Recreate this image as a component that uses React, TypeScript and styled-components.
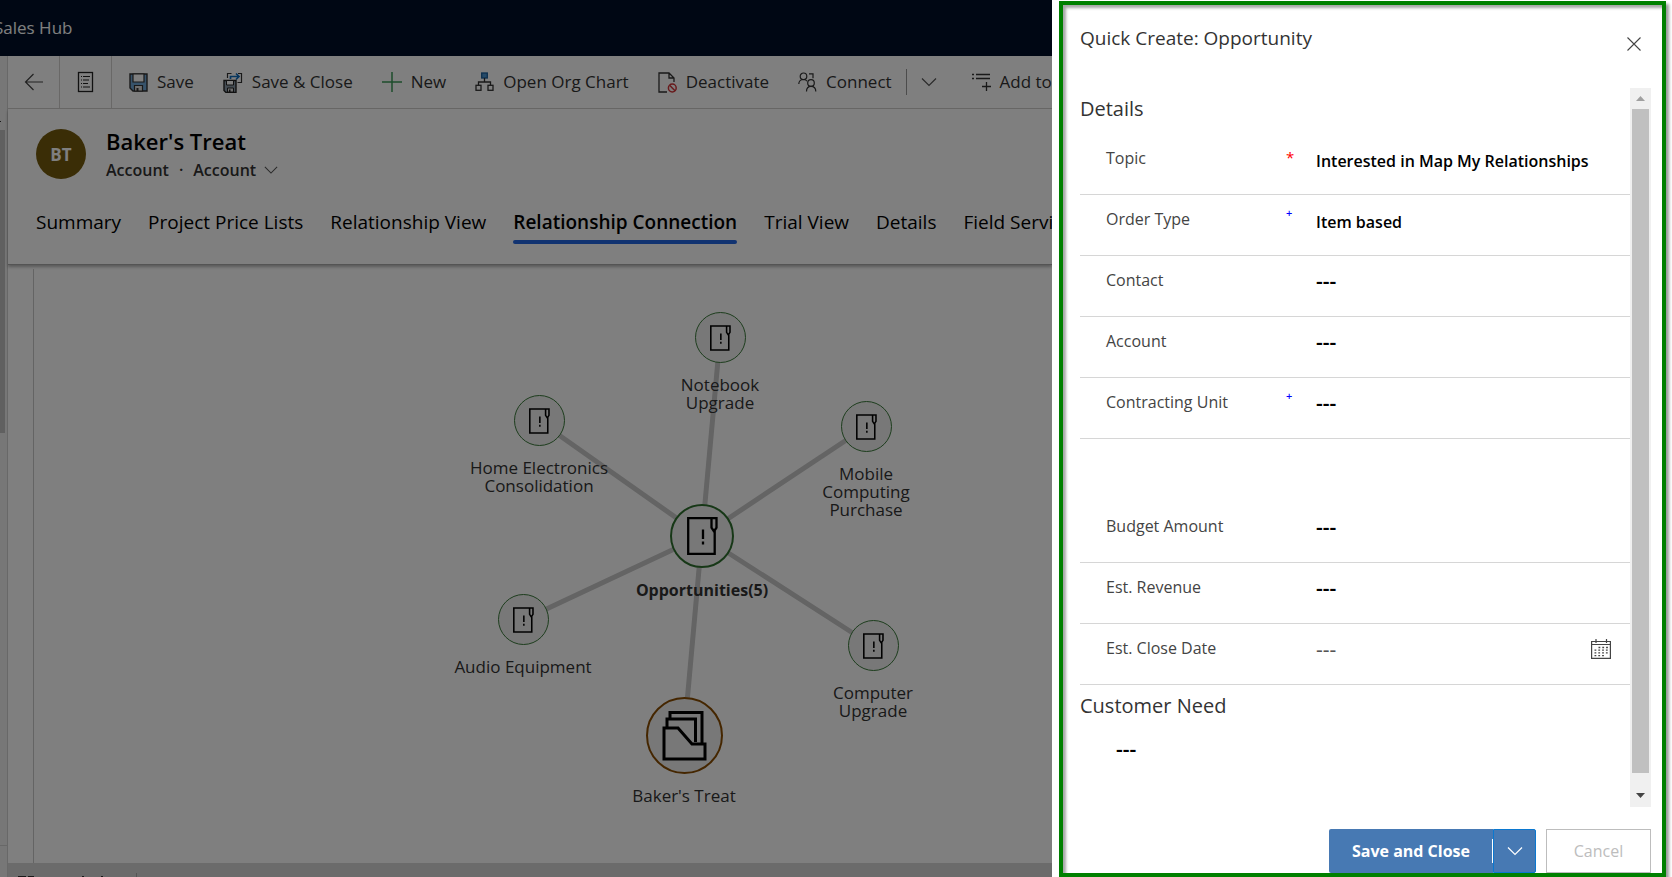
import React from 'react';
import styled, { createGlobalStyle } from 'styled-components';

const GlobalStyle = createGlobalStyle`
  *, *::before, *::after { box-sizing: border-box; }
  body { margin: 0; background: #fff; }
  body, button, input, select, textarea {
    font-family: 'Open Sans', 'Noto Sans', sans-serif;
  }
  button, input, select, textarea { margin: 0; border: 0; padding: 0; background: none; }
  h1, h2 { margin: 0; font-weight: 400; }
`;

/* ---------- page frame ---------- */

const Page = styled.div`
  display: grid;
  grid-template-columns: minmax(0, 1fr) 620px;
  min-height: 100vh;
`;

const AppPane = styled.div`
  position: relative;
  display: flex;
  flex-direction: column;
  overflow: hidden;
  background: #fff;
`;

const Backdrop = styled.div`
  position: absolute;
  inset: 0;
  background: rgba(0, 0, 0, 0.5);
`;

const NavBar = styled.header`
  display: flex;
  align-items: center;
  height: 56px;
  margin-left: -6px;
  padding-bottom: 2px;
  background: #000f28;
  color: #fff;
  font-size: 17px;
  white-space: nowrap;
`;

const Workspace = styled.div`
  flex: 1;
  display: flex;
`;

const Rail = styled.div`
  display: flex;
  flex-direction: column;
  width: 8px;
  padding-top: 65px;
  border-right: 1px solid #d0d0d0;
  background: #efefef;
`;

const RailTick = styled.div`
  width: 1px;
  height: 1px;
  background: #333;
`;

const RailThumb = styled.div`
  width: 5px;
  height: 303px;
  margin-top: 8px;
  background: #c0c0c0;
`;

const RailFoot = styled.div`
  height: 32px;
  margin-top: auto;
  border-top: 1px solid #d0d0d0;
`;

const Main = styled.main`
  flex: 1;
  min-width: 0;
  display: flex;
  flex-direction: column;
`;

/* ---------- command bar ---------- */

const CommandBar = styled.div`
  display: flex;
  height: 53px;
  border-bottom: 1px solid #d2d0ce;
  overflow: hidden;
`;

const SquareButton = styled.button`
  display: flex;
  flex: none;
  align-items: center;
  justify-content: center;
  width: 52px;
  border-right: 1px solid #d2d0ce;
`;

const Commands = styled.div`
  display: flex;
  align-items: center;
  gap: 29px;
  padding-left: 17px;
`;

const Command = styled.button`
  display: flex;
  flex: none;
  align-items: center;
  gap: 9px;
  color: #333;
  font-size: 17px;
  line-height: 24px;
  white-space: nowrap;
`;

const SplitCommand = styled.div`
  display: flex;
  flex: none;
  align-items: center;
  gap: 14px;
  padding-right: 6px;
`;

const SplitLine = styled.span`
  width: 1px;
  height: 26px;
  background: #999;
`;

const IconButton = styled.button`
  display: flex;
  align-items: center;
  justify-content: center;
  padding: 0;
`;

/* ---------- record header ---------- */

const RecordHeader = styled.section`
  position: relative;
  padding: 20px 0 20px 28px;
  border-bottom: 1px solid #a8a8a8;
  box-shadow: 0 2px 3px rgba(0, 0, 0, 0.3);
`;

const Identity = styled.div`
  display: flex;
  gap: 20px;
  height: 52px;
`;

const Avatar = styled.div`
  display: flex;
  align-items: center;
  justify-content: center;
  width: 50px;
  height: 50px;
  border-radius: 50%;
  background: #745a0c;
  color: #fff;
  font-size: 17px;
  font-weight: 700;
`;

const RecordName = styled.h1`
  margin-top: -3px;
  color: #000;
  font-size: 22px;
  font-weight: 600;
  line-height: 30px;
`;

const RecordMeta = styled.div`
  display: flex;
  align-items: center;
  gap: 10px;
  color: #333;
  font-size: 16px;
  font-weight: 600;
  line-height: 28px;
`;

const FormPicker = styled.button`
  display: flex;
  align-items: center;
  gap: 8px;
  color: inherit;
  font-size: 16px;
  font-weight: 600;
  line-height: 28px;
`;

const Tabs = styled.nav`
  display: flex;
  gap: 27px;
  margin-top: 27px;
`;

const Tab = styled.a<{ $active?: boolean }>`
  flex: none;
  color: #000;
  font-size: 19px;
  font-weight: ${(p) => (p.$active ? 600 : 400)};
  line-height: 28px;
  white-space: nowrap;
  text-decoration: none;

  &::after {
    content: '';
    display: block;
    height: 4px;
    margin-top: 4px;
    border-radius: 2px;
    background: ${(p) => (p.$active ? '#2266e3' : 'transparent')};
  }
`;

/* ---------- relationship graph ---------- */

const Canvas = styled.section`
  position: relative;
  flex: 1;
  min-height: 560px;
  margin: 4px 0 0 25px;
  border-left: 1px solid #c8c8c8;
`;

const Edges = styled.svg`
  position: absolute;
  inset: 0;
  width: 100%;
  height: 100%;
`;

const NodeSpot = styled.div`
  position: absolute;
  width: 0;
  display: flex;
  flex-direction: column;
  align-items: center;
  gap: 13px;
`;

const kinds = {
  leaf: { size: 51, border: 1, color: '#3a7a3a', weight: 500, font: 17 },
  hub: { size: 64, border: 2, color: '#2f702f', weight: 700, font: 16 },
  root: { size: 77, border: 2, color: '#8a4d00', weight: 500, font: 17 },
};
type Kind = keyof typeof kinds;

const Bubble = styled.div<{ $kind: Kind }>`
  display: flex;
  flex: none;
  align-items: center;
  justify-content: center;
  width: ${(p) => kinds[p.$kind].size}px;
  height: ${(p) => kinds[p.$kind].size}px;
  border: ${(p) => kinds[p.$kind].border}px solid ${(p) => kinds[p.$kind].color};
  border-radius: 50%;
  background: #f0f0f0;
`;

const NodeLabel = styled.div<{ $kind: Kind }>`
  color: #333;
  font-size: ${(p) => kinds[p.$kind].font}px;
  font-weight: ${(p) => kinds[p.$kind].weight};
  line-height: 18px;
  text-align: center;
  white-space: pre;
`;

const StatusBar = styled.footer`
  display: flex;
  align-items: flex-end;
  height: 14px;
  padding-left: 10px;
  background: #d6d6d6;
`;

interface GraphNode {
  label: string;
  x: number;
  y: number;
  kind: Kind;
}

const hub: GraphNode = { label: 'Opportunities(5)', x: 668, y: 267, kind: 'hub' };
const spokes: GraphNode[] = [
  { label: 'Notebook\nUpgrade', x: 686, y: 69, kind: 'leaf' },
  { label: 'Home Electronics\nConsolidation', x: 505, y: 152, kind: 'leaf' },
  { label: 'Mobile\nComputing\nPurchase', x: 832, y: 158, kind: 'leaf' },
  { label: 'Audio Equipment', x: 489, y: 351, kind: 'leaf' },
  { label: 'Computer\nUpgrade', x: 839, y: 377, kind: 'leaf' },
  { label: "Baker's Treat", x: 650, y: 467, kind: 'root' },
];

/* ---------- quick create panel ---------- */

const PanelArea = styled.aside`
  display: flex;
  padding: 1px 6px 0 7px;
  background: #fff;
`;

const Panel = styled.form`
  flex: 1;
  min-width: 0;
  display: flex;
  flex-direction: column;
  padding-left: 17px;
  border: 4px solid #008000;
  box-shadow: 3px 3px 3px rgba(0, 0, 0, 0.4), inset 3px 3px 3px rgba(0, 0, 0, 0.35);
`;

const PanelHeader = styled.div`
  display: flex;
  justify-content: space-between;
  align-items: flex-start;
  height: 83px;
  padding: 19px 20px 0 0;
`;

const PanelTitle = styled.h1`
  color: #333;
  font-size: 19px;
  line-height: 28px;
`;

const CloseButton = styled(IconButton)`
  width: 16px;
  height: 16px;
  margin-top: 12px;
`;

const PanelBody = styled.div`
  flex: 1;
  display: flex;
  margin-right: 11px;
`;

const Fields = styled.div`
  flex: 1;
  min-width: 0;
`;

const SectionTitle = styled.h2`
  display: block;
  height: 46px;
  padding-top: 7px;
  color: #333;
  font-size: 20px;
  line-height: 28px;
`;

const Row = styled.div`
  display: flex;
  align-items: flex-start;
  height: 61px;
  padding-left: 26px;
  border-bottom: 1px solid #d6d6d6;
`;

const BlankRow = styled.div`
  height: 63px;
`;

const Label = styled.label`
  width: 180px;
  padding-top: 12px;
  color: #444;
  font-size: 16px;
  line-height: 24px;
`;

const Marker = styled.span<{ $required?: boolean }>`
  width: 30px;
  padding-top: ${(p) => (p.$required ? 11 : 10)}px;
  color: ${(p) => (p.$required ? '#f00' : '#00f')};
  font-size: ${(p) => (p.$required ? 15 : 11)}px;
  font-weight: ${(p) => (p.$required ? 400 : 600)};
  line-height: ${(p) => (p.$required ? 24 : 16)}px;
`;

const TextField = styled.input<{ $light?: boolean }>`
  flex: 1;
  min-width: 0;
  height: 24px;
  margin-top: 15px;
  color: ${(p) => (p.$light ? '#555' : '#000')};
  font-size: 16px;
  font-weight: ${(p) => (p.$light ? 400 : 600)};
  outline: none;

  &::placeholder {
    color: inherit;
    font-size: 21px;
    opacity: 1;
  }
`;

const Choice = styled.select`
  flex: 1;
  height: 24px;
  margin-top: 15px;
  appearance: none;
  color: #000;
  font-size: 16px;
  font-weight: 600;
  outline: none;
`;

const CalendarButton = styled(IconButton)`
  margin: 15px 19px 0 0;
`;

const Notes = styled.textarea`
  display: block;
  width: calc(100% - 36px);
  height: 60px;
  margin-left: 36px;
  padding-top: 6px;
  color: #000;
  font-size: 16px;
  font-weight: 600;
  line-height: 24px;
  resize: none;
  outline: none;

  &::placeholder {
    color: inherit;
    font-size: 21px;
    opacity: 1;
  }
`;

const ScrollTrack = styled.div`
  display: flex;
  flex-direction: column;
  align-items: center;
  width: 21px;
  background: #f0f0f0;
`;

const ScrollArrow = styled.div<{ $down?: boolean }>`
  display: flex;
  align-items: center;
  justify-content: center;
  height: ${(p) => (p.$down ? 24 : 21)}px;
`;

const ScrollThumb = styled.div`
  flex: 1;
  width: 17px;
  margin-bottom: 10px;
  background: #c0c0c0;
`;

const PanelFooter = styled.div`
  display: flex;
  justify-content: flex-end;
  height: 66px;
  padding: 22px 11px 0 0;
`;

const PrimaryButton = styled.button`
  width: 164px;
  padding: 0;
  border-radius: 2px 0 0 2px;
  background: #4779b3;
  color: #fff;
  font-size: 16px;
  font-weight: 700;
`;

const MoreButton = styled(IconButton)`
  position: relative;
  width: 43px;
  border: 1px solid #0b78d0;
  border-radius: 0 2px 2px 0;
  background: #4779b3;

  &::before {
    content: '';
    position: absolute;
    left: -2px;
    top: 9px;
    width: 1px;
    height: 24px;
    background: #fff;
  }
`;

const CancelButton = styled.button`
  width: 105px;
  margin-left: 10px;
  border: 1px solid #bdbdbd;
  color: #bdbdbd;
  font-size: 16px;
`;

/* ---------- icons ---------- */

const Chevron = ({ color = '#555', size = 16 }: { color?: string; size?: number }) => (
  <svg width={size} height={size} viewBox="0 0 16 16" fill="none" stroke={color} strokeWidth="1.2">
    <path d="M1 4.5l7 7 7-7" />
  </svg>
);

const BackIcon = () => (
  <svg width="20" height="20" viewBox="0 0 20 20" fill="none" stroke="#444" strokeWidth="1.2">
    <path d="M19 10H1.500M9.500 2L1.500 10l8 8" />
  </svg>
);

const FormIcon = () => (
  <svg width="18" height="22" viewBox="0 0 18 22" fill="none" stroke="#222">
    <rect x="1.500" y="1.500" width="14" height="19" strokeWidth="1.300" />
    <path d="M4 5.500h1M6 5.500h7M4 9h1M6 9h6M4 12.500h1M6 12.500h5M4 16h1M6 16h7" />
  </svg>
);

const SaveIcon = () => (
  <svg width="19" height="19" viewBox="0 0 19 19">
    <path d="M1 1h17v17H4l-3-3z" fill="#6fa6d6" stroke="#333" strokeWidth="1.400" />
    <path d="M4 1h11v8H4z" fill="#fff" stroke="#333" strokeWidth="1.200" />
    <path d="M5.500 18v-5.500h8V18z" fill="#ddd" stroke="#333" strokeWidth="1.200" />
    <path d="M7.500 15h2v3h-2z" fill="#333" />
  </svg>
);

const SaveCloseIcon = () => (
  <svg width="20" height="21" viewBox="0 0 20 21" fill="none">
    <path d="M4.500 6V1.500h4M15 1.500h3.500v9h-4" stroke="#333" strokeWidth="1.200" />
    <path d="M7.500 7V4.500h8M13 1.500l3 3-3 3" stroke="#0f6cbd" strokeWidth="1.700" />
    <path d="M1 8.500h12v12H3l-2-2z" fill="#8a9aa8" stroke="#222" strokeWidth="1.400" />
    <path d="M3.500 8.500h7V13h-7z" fill="#fff" stroke="#222" />
    <path d="M4.500 20v-4h6v4z" fill="#ddd" stroke="#222" />
    <path d="M6 17.500h1.500V20H6z" fill="#222" />
  </svg>
);

const PlusIcon = () => (
  <svg width="20" height="20" viewBox="0 0 20 20" stroke="#3a9a58" strokeWidth="1.500">
    <path d="M10 0v20M0 10h20" />
  </svg>
);

const OrgIcon = () => (
  <svg width="19" height="20" viewBox="0 0 19 20" fill="none" stroke="#333" strokeWidth="1.300">
    <rect x="6.700" y="1" width="5.600" height="5" fill="#4a94d0" stroke="#1a5f9c" />
    <path d="M9.500 6v4M3.500 13v-3h12v3" />
    <rect x="1" y="13.300" width="5" height="5" />
    <rect x="13" y="13.300" width="5" height="5" />
  </svg>
);

const DeactivateIcon = () => (
  <svg width="19" height="21" viewBox="0 0 19 21" fill="none" stroke="#333" strokeWidth="1.300">
    <path d="M9 20H1V1h10l5 5v4M11 1v5h5" />
    <circle cx="14.300" cy="16" r="3.900" stroke="#d13438" strokeWidth="1.500" />
    <path d="M11.600 13.300l5.400 5.400" stroke="#d13438" strokeWidth="1.500" />
  </svg>
);

const ConnectIcon = () => (
  <svg width="19" height="20" viewBox="0 0 19 20" fill="none" stroke="#333" strokeWidth="1.200">
    <circle cx="5.500" cy="4.300" r="3.300" />
    <path d="M.800 12c0-3 2-4.500 4.700-4.500 1.500 0 2.700.6 3.500 1.600" />
    <circle cx="13" cy="11" r="3.300" />
    <path d="M8.500 19.500c0-3.300 1.800-5.200 4.500-5.200s4.800 1.900 4.800 5.200M11 1.800h4v4.500" />
  </svg>
);

const AddToIcon = () => (
  <svg width="19" height="20" viewBox="0 0 19 20" fill="none" stroke="#333" strokeWidth="1.300">
    <path d="M0 2.500h2M4 2.500h14M0 6.500h2M4 6.500h14M14.500 10v9M10 14.500h9" />
  </svg>
);

const OpportunityIcon = ({ width }: { width: number }) => (
  <svg
    width={width}
    height={Math.round((width * 38) / 31)}
    viewBox="0 0 31 38"
    fill="none"
    stroke="#000"
    strokeWidth="2.300"
  >
    <path d="M24.500 1.200H1.200v35.600h26.500V14M24.500 1.200h5v9.500L27 14.500l-2.500-3.800z" />
    <path d="M16 12.500v9.500M16 24.500v3" />
  </svg>
);

const FolderIcon = () => (
  <svg width="45" height="51" viewBox="0 0 45 51" fill="none" stroke="#000" strokeWidth="3">
    <path d="M8 9V2.500h32V33M5 17V9h28.500v23M2 18v31h41V34H30L16 18z" />
  </svg>
);

const CalendarIcon = () => (
  <svg width="20" height="20" viewBox="0 0 20 20" fill="none" stroke="#444">
    <path d="M.600 2.500h18.800v16.800H.600zM.600 5.500h18.800M5 0v4M15.500 0v4" strokeWidth="1.200" />
    <path d="M7.500 8.500h10M3.500 11.200h14M3.500 13.900h14M3.500 16.600h10" strokeWidth="1.300" strokeDasharray="1.800 2" />
  </svg>
);

const CloseIcon = () => (
  <svg width="16" height="16" viewBox="0 0 16 16" stroke="#444" strokeWidth="1.100">
    <path d="M1.500 1.500l13 13M14.500 1.500l-13 13" />
  </svg>
);

const Triangle = ({ down }: { down?: boolean }) => (
  <svg width="9" height="5" viewBox="0 0 9 5" fill={down ? '#444' : '#a0a0a0'}>
    <path d={down ? 'M0 0h9L4.500 5z' : 'M0 5h9L4.500 0z'} />
  </svg>
);

/* ---------- parts ---------- */

const commands = [
  { text: 'Save', icon: <SaveIcon /> },
  { text: 'Save & Close', icon: <SaveCloseIcon /> },
  { text: 'New', icon: <PlusIcon /> },
  { text: 'Open Org Chart', icon: <OrgIcon /> },
  { text: 'Deactivate', icon: <DeactivateIcon /> },
];

const tabs = [
  'Summary',
  'Project Price Lists',
  'Relationship View',
  'Relationship Connection',
  'Trial View',
  'Details',
  'Field Service',
];

function NodeView({ node }: { node: GraphNode }) {
  return (
    <NodeSpot style={{ left: node.x, top: node.y - Math.round(kinds[node.kind].size / 2) }}>
      <Bubble $kind={node.kind}>
        {node.kind === 'root' ? <FolderIcon /> : <OpportunityIcon width={node.kind === 'hub' ? 31 : 21} />}
      </Bubble>
      <NodeLabel $kind={node.kind}>{node.label}</NodeLabel>
    </NodeSpot>
  );
}

interface FieldProps {
  id: string;
  label: string;
  value?: string;
  marker?: '*' | '+';
}

function Field({ id, label, value, marker }: FieldProps) {
  return (
    <Row>
      <Label htmlFor={id}>{label}</Label>
      <Marker $required={marker === '*'}>{marker}</Marker>
      <TextField id={id} defaultValue={value} placeholder="---" />
    </Row>
  );
}

function QuickCreate() {
  return (
    <PanelArea>
      <Panel onSubmit={(e) => e.preventDefault()}>
        <PanelHeader>
          <PanelTitle>Quick Create: Opportunity</PanelTitle>
          <CloseButton type="button" aria-label="Close">
            <CloseIcon />
          </CloseButton>
        </PanelHeader>
        <PanelBody>
          <Fields>
            <SectionTitle>Details</SectionTitle>
            <Field id="topic" label="Topic" marker="*" value="Interested in Map My Relationships" />
            <Row>
              <Label htmlFor="order-type">Order Type</Label>
              <Marker>+</Marker>
              <Choice id="order-type">
                <option>Item based</option>
              </Choice>
            </Row>
            <Field id="contact" label="Contact" />
            <Field id="account" label="Account" />
            <Field id="contracting-unit" label="Contracting Unit" marker="+" />
            <BlankRow />
            <Field id="budget" label="Budget Amount" />
            <Field id="revenue" label="Est. Revenue" />
            <Row>
              <Label htmlFor="close-date">Est. Close Date</Label>
              <Marker />
              <TextField id="close-date" placeholder="---" $light />
              <CalendarButton type="button" aria-label="Pick a date">
                <CalendarIcon />
              </CalendarButton>
            </Row>
            <SectionTitle as="label" htmlFor="need">
              Customer Need
            </SectionTitle>
            <Notes id="need" placeholder="---" />
          </Fields>
          <ScrollTrack>
            <ScrollArrow>
              <Triangle />
            </ScrollArrow>
            <ScrollThumb />
            <ScrollArrow $down>
              <Triangle down />
            </ScrollArrow>
          </ScrollTrack>
        </PanelBody>
        <PanelFooter>
          <PrimaryButton type="submit">Save and Close</PrimaryButton>
          <MoreButton type="button" aria-label="More save options">
            <Chevron color="#fff" />
          </MoreButton>
          <CancelButton type="button">Cancel</CancelButton>
        </PanelFooter>
      </Panel>
    </PanelArea>
  );
}

export default function App() {
  return (
    <>
      <GlobalStyle />
      <Page>
        <AppPane>
          <NavBar>Sales Hub</NavBar>
          <Workspace>
            <Rail>
              <RailTick />
              <RailThumb />
              <RailFoot />
            </Rail>
            <Main>
              <CommandBar>
                <SquareButton aria-label="Back">
                  <BackIcon />
                </SquareButton>
                <SquareButton aria-label="Form">
                  <FormIcon />
                </SquareButton>
                <Commands>
                  {commands.map((c) => (
                    <Command key={c.text}>
                      {c.icon}
                      {c.text}
                    </Command>
                  ))}
                  <SplitCommand>
                    <Command>
                      <ConnectIcon />
                      Connect
                    </Command>
                    <SplitLine />
                    <IconButton aria-label="More connect options">
                      <Chevron />
                    </IconButton>
                  </SplitCommand>
                  <Command>
                    <AddToIcon />
                    Add to
                  </Command>
                </Commands>
              </CommandBar>
              <RecordHeader>
                <Identity>
                  <Avatar>BT</Avatar>
                  <div>
                    <RecordName>Baker's Treat</RecordName>
                    <RecordMeta>
                      <span>Account</span>
                      <span>·</span>
                      <FormPicker>
                        Account
                        <Chevron size={14} />
                      </FormPicker>
                    </RecordMeta>
                  </div>
                </Identity>
                <Tabs>
                  {tabs.map((t) => (
                    <Tab key={t} href="#" $active={t === 'Relationship Connection'}>
                      {t}
                    </Tab>
                  ))}
                </Tabs>
              </RecordHeader>
              <Canvas>
                <Edges stroke="#c8c8c8" strokeWidth="5">
                  {spokes.map((s) => (
                    <line key={s.label} x1={hub.x} y1={hub.y} x2={s.x} y2={s.y} />
                  ))}
                </Edges>
                {[...spokes, hub].map((n) => (
                  <NodeView key={n.label} node={n} />
                ))}
              </Canvas>
              <StatusBar>
                <svg width="120" height="4" viewBox="0 0 120 4" fill="#333">
                  <path d="M0 3h8v1H0zM10 3h6v1h-6zM64 3h2v1h-2zM83 3h2v1h-2z" />
                  <path d="M118 0h1v4h-1z" fill="#aaa" />
                </svg>
              </StatusBar>
            </Main>
          </Workspace>
          <Backdrop />
        </AppPane>
        <QuickCreate />
      </Page>
    </>
  );
}
